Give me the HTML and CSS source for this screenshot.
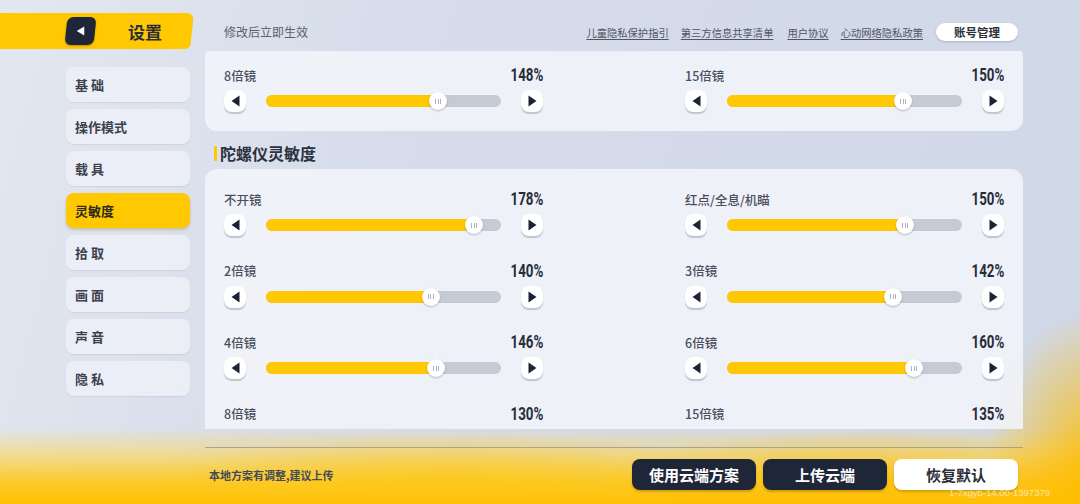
FILE: index.html
```html
<!DOCTYPE html>
<html lang="zh-CN">
<head>
<meta charset="utf-8">
<title>设置</title>
<link rel="stylesheet" href="styles.css">
</head>
<body>
<div class="app">
  <aside class="side">
    <div class="hdr">
      <div class="back"><svg viewBox="0 0 10 11"><path d="M9.2 0.6 V10.4 L0.8 5.5 Z"/></svg></div>
      <span class="hdr-title">设置</span>
    </div>
    <nav class="menu">
      <div class="mi">基 础</div>
      <div class="mi">操作模式</div>
      <div class="mi">载 具</div>
      <div class="mi on">灵敏度</div>
      <div class="mi">拾 取</div>
      <div class="mi">画 面</div>
      <div class="mi">声 音</div>
      <div class="mi">隐 私</div>
    </nav>
  </aside>
  <main class="main">
    <div class="topbar">
      <span class="hint">修改后立即生效</span>
      <div class="links">
        <a>儿童隐私保护指引</a>
        <a>第三方信息共享清单</a>
        <a class="w2">用户协议</a>
        <a>心动网络隐私政策</a>
        <span class="acct">账号管理</span>
      </div>
    </div>
    <div class="scroll">
      <div class="scroll-inner">
        <section class="card">
          <div class="row">
            <div class="row-head"><span class="lbl">8倍镜</span><span class="val">148%</span></div>
            <div class="ctrl">
              <span class="abtn"><svg viewBox="0 0 9 12"><path d="M8.5 0.5 V11.5 L0.5 6 Z"/></svg></span>
              <div class="track"><div class="fill" style="width:73.3%"></div><span class="thumb" style="left:73.3%"><i></i><i></i><i></i></span></div>
              <span class="abtn"><svg viewBox="0 0 9 12"><path d="M0.5 0.5 V11.5 L8.5 6 Z"/></svg></span>
            </div>
          </div>
          <div class="row">
            <div class="row-head"><span class="lbl">15倍镜</span><span class="val">150%</span></div>
            <div class="ctrl">
              <span class="abtn"><svg viewBox="0 0 9 12"><path d="M8.5 0.5 V11.5 L0.5 6 Z"/></svg></span>
              <div class="track"><div class="fill" style="width:75%"></div><span class="thumb" style="left:75%"><i></i><i></i><i></i></span></div>
              <span class="abtn"><svg viewBox="0 0 9 12"><path d="M0.5 0.5 V11.5 L8.5 6 Z"/></svg></span>
            </div>
          </div>
        </section>
        <h2 class="sec-title">陀螺仪灵敏度</h2>
        <section class="card">
          <div class="row">
            <div class="row-head"><span class="lbl">不开镜</span><span class="val">178%</span></div>
            <div class="ctrl">
              <span class="abtn"><svg viewBox="0 0 9 12"><path d="M8.5 0.5 V11.5 L0.5 6 Z"/></svg></span>
              <div class="track"><div class="fill" style="width:88.6%"></div><span class="thumb" style="left:88.6%"><i></i><i></i><i></i></span></div>
              <span class="abtn"><svg viewBox="0 0 9 12"><path d="M0.5 0.5 V11.5 L8.5 6 Z"/></svg></span>
            </div>
          </div>
          <div class="row">
            <div class="row-head"><span class="lbl">红点/全息/机瞄</span><span class="val">150%</span></div>
            <div class="ctrl">
              <span class="abtn"><svg viewBox="0 0 9 12"><path d="M8.5 0.5 V11.5 L0.5 6 Z"/></svg></span>
              <div class="track"><div class="fill" style="width:75.8%"></div><span class="thumb" style="left:75.8%"><i></i><i></i><i></i></span></div>
              <span class="abtn"><svg viewBox="0 0 9 12"><path d="M0.5 0.5 V11.5 L8.5 6 Z"/></svg></span>
            </div>
          </div>
          <div class="row">
            <div class="row-head"><span class="lbl">2倍镜</span><span class="val">140%</span></div>
            <div class="ctrl">
              <span class="abtn"><svg viewBox="0 0 9 12"><path d="M8.5 0.5 V11.5 L0.5 6 Z"/></svg></span>
              <div class="track"><div class="fill" style="width:70%"></div><span class="thumb" style="left:70%"><i></i><i></i><i></i></span></div>
              <span class="abtn"><svg viewBox="0 0 9 12"><path d="M0.5 0.5 V11.5 L8.5 6 Z"/></svg></span>
            </div>
          </div>
          <div class="row">
            <div class="row-head"><span class="lbl">3倍镜</span><span class="val">142%</span></div>
            <div class="ctrl">
              <span class="abtn"><svg viewBox="0 0 9 12"><path d="M8.5 0.5 V11.5 L0.5 6 Z"/></svg></span>
              <div class="track"><div class="fill" style="width:70.8%"></div><span class="thumb" style="left:70.8%"><i></i><i></i><i></i></span></div>
              <span class="abtn"><svg viewBox="0 0 9 12"><path d="M0.5 0.5 V11.5 L8.5 6 Z"/></svg></span>
            </div>
          </div>
          <div class="row">
            <div class="row-head"><span class="lbl">4倍镜</span><span class="val">146%</span></div>
            <div class="ctrl">
              <span class="abtn"><svg viewBox="0 0 9 12"><path d="M8.5 0.5 V11.5 L0.5 6 Z"/></svg></span>
              <div class="track"><div class="fill" style="width:72.5%"></div><span class="thumb" style="left:72.5%"><i></i><i></i><i></i></span></div>
              <span class="abtn"><svg viewBox="0 0 9 12"><path d="M0.5 0.5 V11.5 L8.5 6 Z"/></svg></span>
            </div>
          </div>
          <div class="row">
            <div class="row-head"><span class="lbl">6倍镜</span><span class="val">160%</span></div>
            <div class="ctrl">
              <span class="abtn"><svg viewBox="0 0 9 12"><path d="M8.5 0.5 V11.5 L0.5 6 Z"/></svg></span>
              <div class="track"><div class="fill" style="width:79.7%"></div><span class="thumb" style="left:79.7%"><i></i><i></i><i></i></span></div>
              <span class="abtn"><svg viewBox="0 0 9 12"><path d="M0.5 0.5 V11.5 L8.5 6 Z"/></svg></span>
            </div>
          </div>
          <div class="row">
            <div class="row-head"><span class="lbl">8倍镜</span><span class="val">130%</span></div>
            <div class="ctrl">
              <span class="abtn"><svg viewBox="0 0 9 12"><path d="M8.5 0.5 V11.5 L0.5 6 Z"/></svg></span>
              <div class="track"><div class="fill" style="width:60%"></div><span class="thumb" style="left:60%"><i></i><i></i><i></i></span></div>
              <span class="abtn"><svg viewBox="0 0 9 12"><path d="M0.5 0.5 V11.5 L8.5 6 Z"/></svg></span>
            </div>
          </div>
          <div class="row">
            <div class="row-head"><span class="lbl">15倍镜</span><span class="val">135%</span></div>
            <div class="ctrl">
              <span class="abtn"><svg viewBox="0 0 9 12"><path d="M8.5 0.5 V11.5 L0.5 6 Z"/></svg></span>
              <div class="track"><div class="fill" style="width:62%"></div><span class="thumb" style="left:62%"><i></i><i></i><i></i></span></div>
              <span class="abtn"><svg viewBox="0 0 9 12"><path d="M0.5 0.5 V11.5 L8.5 6 Z"/></svg></span>
            </div>
          </div>
        </section>
      </div>
    </div>
    <div class="divider"></div>
    <div class="bottombar">
      <span class="tip">本地方案有调整,建议上传</span>
      <div class="btns">
        <span class="btn">使用云端方案</span>
        <span class="btn">上传云端</span>
        <span class="btn light">恢复默认</span>
      </div>
    </div>
  </main>
</div>
<div class="ver">1-7xgyb-14.00-1397379</div>
</body>
</html>
```
FILE: styles.css
```css
* { box-sizing: border-box; margin: 0; padding: 0; }
html, body { width: 1080px; height: 504px; overflow: hidden; }
body {
  position: relative;
  font-family: "Noto Sans CJK SC", "Noto Sans", sans-serif;
  color: #2c3140;
  background:
    radial-gradient(ellipse 110px 160px at 1095px 470px, rgba(255, 188, 0, 0.95), rgba(255, 188, 0, 0) 100%),
    radial-gradient(ellipse 300px 45px at 450px 478px, rgba(255, 200, 20, 0.6), rgba(255, 200, 20, 0) 100%),
    radial-gradient(ellipse 260px 50px at 860px 480px, rgba(255, 190, 0, 0.6), rgba(255, 190, 0, 0) 100%),
    linear-gradient(to bottom, rgba(255, 208, 50, 0) 0, rgba(255, 208, 50, 0) 428px, rgba(255, 214, 80, 0.6) 456px, rgba(255, 200, 25, 0.92) 482px, #ffc000 504px),
    linear-gradient(105deg, #e3e7f0 0%, #d6dcea 35%, #d0d7e7 100%);
}

.app {
  display: grid;
  grid-template-columns: 194px 818px;
  column-gap: 11px;
  padding-top: 13px;
  height: 504px;
}

/* ---------- sidebar ---------- */
.side { display: flex; flex-direction: column; }
.hdr {
  position: relative;
  isolation: isolate;
  height: 36px;
  display: flex;
  align-items: center;
  padding-left: 66px;
}
.hdr::before {
  content: "";
  position: absolute;
  top: 0; bottom: 0; left: -20px; right: 2px;
  background: #ffc800;
  transform: skewX(-6deg);
  border-radius: 0 7px 5px 0;
  z-index: -1;
}
.back {
  width: 29px;
  height: 28px;
  background: #1f2638;
  border-radius: 6px;
  transform: skewX(-6deg);
  display: flex;
  align-items: center;
  justify-content: center;
  box-shadow: 0 1px 2px rgba(60, 40, 0, 0.35);
}
.back svg { width: 9px; height: 10px; fill: #fff; transform: skewX(6deg); margin-left: -1px; }
.hdr-title {
  margin-left: 33px;
  font-size: 17px;
  font-weight: 700;
  color: #2b2f3a;
}
.menu {
  display: flex;
  flex-direction: column;
  gap: 7px;
  margin-top: 18px;
  padding-left: 66px;
}
.mi {
  width: 124px;
  height: 35px;
  border-radius: 8px;
  background: rgba(237, 240, 247, 0.85);
  display: flex;
  align-items: center;
  padding-left: 9px;
  font-size: 13px;
  font-weight: 700;
  color: #3b404d;
  box-shadow: 0 1px 1px rgba(120, 130, 160, 0.15);
}
.mi.on {
  background: #ffc800;
  color: #2e2a1e;
  box-shadow: 0 2px 3px rgba(150, 120, 0, 0.3);
}

/* ---------- main ---------- */
.main { display: flex; flex-direction: column; }
.topbar {
  height: 38px;
  display: flex;
  align-items: center;
  padding-left: 19px;
  padding-right: 5px;
}
.hint { font-size: 12px; color: #5b6170; margin-top: -2px; }
.links { margin-left: auto; display: flex; align-items: center; gap: 12px; }
.links a {
  font-size: 10.3px;
  color: #4f5564;
  text-decoration: underline;
  text-underline-offset: 2px;
}
.links a.w2 { margin-left: 2px; }
.acct {
  margin-left: 1px;
  width: 82px;
  height: 18px;
  border-radius: 9px;
  background: #fff;
  display: flex;
  align-items: center;
  justify-content: center;
  font-size: 11.5px;
  font-weight: 700;
  color: #2a2f3a;
  box-shadow: 0 1px 2px rgba(60, 70, 100, 0.25);
}

.scroll { height: 378px; overflow: hidden; }
.scroll-inner { margin-top: -6px; }
.card {
  background: rgba(243, 245, 250, 0.86);
  border-radius: 12px;
  padding: 22px 19px 19px;
  display: grid;
  grid-template-columns: 319px 319px;
  column-gap: 142px;
  row-gap: 26.5px;
}
.sec-title {
  margin: 12px 0 6px;
  height: 20px;
  display: flex;
  align-items: center;
  padding-left: 9px;
  font-size: 16px;
  font-weight: 700;
  color: #2d3240;
}
.sec-title::before {
  content: "";
  width: 3px;
  height: 15px;
  background: #ffc800;
  border-radius: 1px;
  margin-right: 3px;
}

.row-head {
  display: flex;
  justify-content: space-between;
  align-items: center;
  height: 16px;
}
.lbl { font-size: 12.5px; font-weight: 500; color: #4a4f5e; }
.val {
  display: inline-block;
  font-family: Roboto, "Liberation Sans", sans-serif;
  font-weight: 700;
  font-size: 18px;
  line-height: 16px;
  color: #272c3a;
  transform: scaleX(0.74);
  transform-origin: right center;
}
.ctrl { margin-top: 7px; height: 22px; display: flex; align-items: center; }
.abtn {
  flex: none;
  width: 22px;
  height: 22px;
  border-radius: 8px;
  background: #fff;
  display: flex;
  align-items: center;
  justify-content: center;
  box-shadow: 0 1.5px 1px rgba(50, 60, 90, 0.25);
}
.abtn svg { width: 9px; height: 12px; fill: #1c2335; }
.track {
  flex: 1;
  margin: 0 20px;
  height: 12px;
  border-radius: 6px;
  background: #c6cad4;
  position: relative;
}
.fill { height: 100%; border-radius: 6px; background: #ffc800; }
.thumb {
  position: absolute;
  top: 50%;
  width: 18px;
  height: 18px;
  margin: -9px 0 0 -9px;
  border-radius: 50%;
  background: #fff;
  box-shadow: 0 1px 2px rgba(40, 50, 80, 0.3);
  display: flex;
  align-items: center;
  justify-content: center;
  gap: 1.5px;
}
.thumb i { width: 1px; height: 5px; background: #aeb3bf; }

.divider {
  margin-top: 18px;
  margin-bottom: 11px;
  height: 1px;
  background: rgba(140, 146, 160, 0.75);
}
.bottombar {
  height: 31px;
  display: flex;
  align-items: center;
  padding-left: 4px;
  padding-right: 5px;
}
.tip { font-size: 11px; font-weight: 700; color: #454a57; }
.btns { margin-left: auto; display: flex; gap: 7px; }
.btn {
  width: 124px;
  height: 31px;
  border-radius: 8px;
  background: #1f2638;
  color: #fff;
  font-size: 15px;
  font-weight: 700;
  display: flex;
  align-items: center;
  justify-content: center;
  box-shadow: 0 2px 2px rgba(120, 80, 0, 0.3);
}
.btn.light { background: #fff; color: #2a2f3a; }

.ver {
  position: absolute;
  right: 30px;
  top: 487px;
  font-family: "Liberation Sans", sans-serif;
  font-size: 9.5px;
  color: rgba(255, 255, 255, 0.6);
}
```
